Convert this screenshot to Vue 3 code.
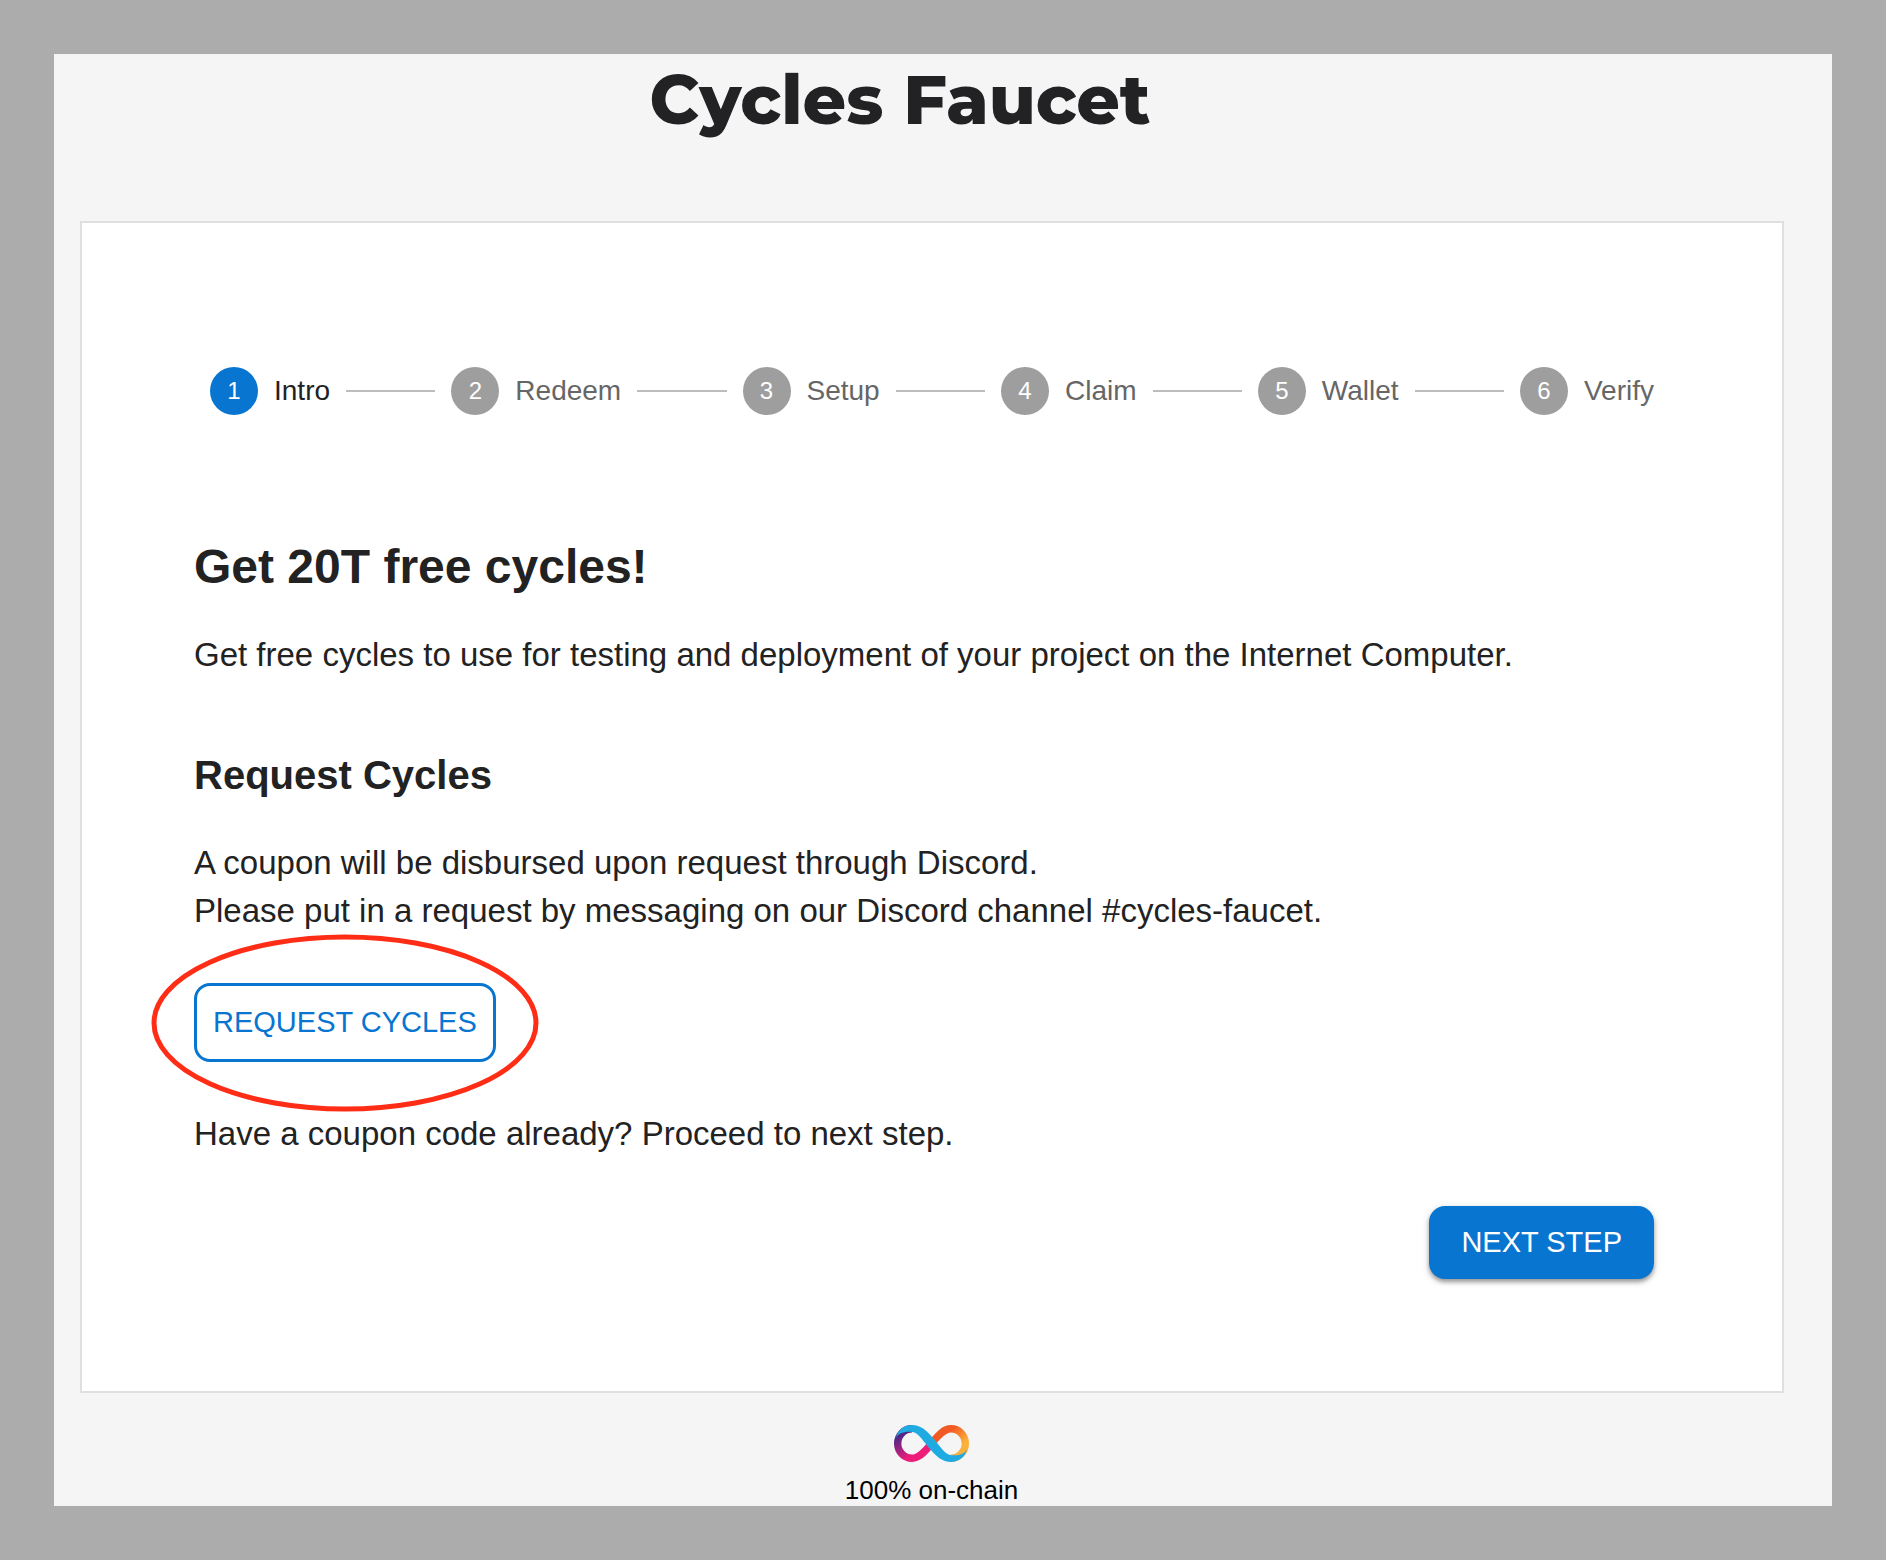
<script setup>
const steps = ['Intro', 'Redeem', 'Setup', 'Claim', 'Wallet', 'Verify']
const active = 0
</script>

<template>
  <div class="page">
    <div class="window">
      <h1 class="title">Cycles Faucet</h1>

      <main class="card">
        <ol class="stepper">
          <template v-for="(step, i) in steps" :key="step">
            <li v-if="i > 0" class="connector" aria-hidden="true"></li>
            <li class="step" :class="{ active: i === active }">
              <span class="badge">{{ i + 1 }}</span>
              <span>{{ step }}</span>
            </li>
          </template>
        </ol>

        <h2>Get 20T free cycles!</h2>
        <p class="lead">Get free cycles to use for testing and deployment of your project on the Internet Computer.</p>

        <h3>Request Cycles</h3>
        <p>
          A coupon will be disbursed upon request through Discord.<br />
          Please put in a request by messaging on our Discord channel #cycles-faucet.
        </p>

        <div class="request">
          <button type="button" class="btn outlined">REQUEST CYCLES</button>
          <svg class="ring" viewBox="0 0 388 178" aria-hidden="true">
            <ellipse cx="194" cy="89" rx="191" ry="86" fill="none" stroke="#ff2d16" stroke-width="5" />
          </svg>
        </div>

        <p>Have a coupon code already? Proceed to next step.</p>

        <div class="actions">
          <button type="button" class="btn contained">NEXT STEP</button>
        </div>
      </main>

      <footer class="footer">
        <svg class="logo" viewBox="0 0 224 110" aria-hidden="true">
          <defs>
            <linearGradient id="violet" gradientUnits="userSpaceOnUse" x1="70" y1="105" x2="20" y2="20">
              <stop offset="0.2" stop-color="#ed1e79" />
              <stop offset="0.9" stop-color="#522785" />
            </linearGradient>
            <linearGradient id="orange" gradientUnits="userSpaceOnUse" x1="145" y1="10" x2="210" y2="85">
              <stop offset="0.2" stop-color="#f15a24" />
              <stop offset="0.75" stop-color="#fbb03b" />
            </linearGradient>
          </defs>
          <path d="M112 55C92 80 75 99 54 99C30 99 11 79 11 55C11 31 30 11 54 11" fill="none" stroke="url(#violet)" stroke-width="22" />
          <path d="M112 55C132 30 149 11 170 11C194 11 213 31 213 55C213 79 194 99 170 99" fill="none" stroke="url(#orange)" stroke-width="22" />
          <path d="M6 38C12 14 31 0 54 0C79 0 98 16 121 44C144 72 153 88 172 90C194 92 212 85 218 72C212 96 193 110 170 110C145 110 126 94 103 66C80 38 71 22 52 20C30 18 12 25 6 38Z" fill="#1fabe2" />
        </svg>
        <span>100% on-chain</span>
      </footer>
    </div>
  </div>
</template>

<style>
body {
  margin: 0;
  background: #acacac;
}
</style>

<style scoped>
.page {
  padding: 54px;
  font-family: 'Liberation Sans', Helvetica, Arial, sans-serif;
  color: #222;
}
.window {
  background: #f5f5f5;
}
h1, h2, h3, p {
  margin: 0;
}
.title {
  padding-right: 86px;
  font: 800 68px/92px Montserrat, Inter, sans-serif;
  color: #222224;
  text-align: center;
}
.card {
  margin: 75px 48px 0 26px;
  padding: 112px;
  padding-right: 128px;
  background: #fff;
  border: 2px solid #e0e0e0;
}
.stepper {
  display: flex;
  align-items: center;
  gap: 16px;
  margin: 0;
  padding: 32px 0 0 16px;
  list-style: none;
}
.step {
  display: flex;
  align-items: center;
  gap: 16px;
  font-size: 28px;
  line-height: 40px;
  color: #666;
}
.step.active {
  color: #222;
}
.badge {
  width: 48px;
  height: 48px;
  border-radius: 50%;
  background: #9e9e9e;
  color: #fff;
  font-size: 24px;
  line-height: 48px;
  text-align: center;
}
.active .badge {
  background: #0875d0;
}
.connector {
  flex: 1;
  height: 2px;
  background: #bdbdbd;
}
h2 {
  margin-top: 120px;
  font-size: 48px;
  line-height: 64px;
}
h3 {
  margin: 72px 0 40px;
  font-size: 40px;
  line-height: 48px;
}
p {
  font-size: 33px;
  line-height: 48px;
}
.lead {
  margin-top: 32px;
}
.request {
  position: relative;
  width: max-content;
  margin: 48px 0;
}
.ring {
  position: absolute;
  top: 50%;
  left: 50%;
  width: 388px;
  height: 178px;
  transform: translate(-50%, -50%);
  pointer-events: none;
}
.btn {
  display: block;
  border-radius: 16px;
  font-family: inherit;
  font-size: 29px;
  line-height: 49px;
}
.outlined {
  padding: 12px 16px;
  border: 3px solid #0875d0;
  background: transparent;
  color: #0875d0;
}
.contained {
  padding: 12px 32px;
  border: 0;
  background: #0875d0;
  color: #fff;
  box-shadow: 0 3px 4px rgba(0, 0, 0, 0.35), 0 2px 10px rgba(0, 0, 0, 0.12);
}
.actions {
  display: flex;
  justify-content: flex-end;
  margin-top: 48px;
}
.footer {
  display: flex;
  flex-direction: column;
  align-items: center;
  gap: 12px;
  margin-right: 23px;
  padding-top: 32px;
  font-size: 26px;
  line-height: 32px;
  color: #000;
}
.logo {
  width: 75px;
  height: 37px;
}
</style>
